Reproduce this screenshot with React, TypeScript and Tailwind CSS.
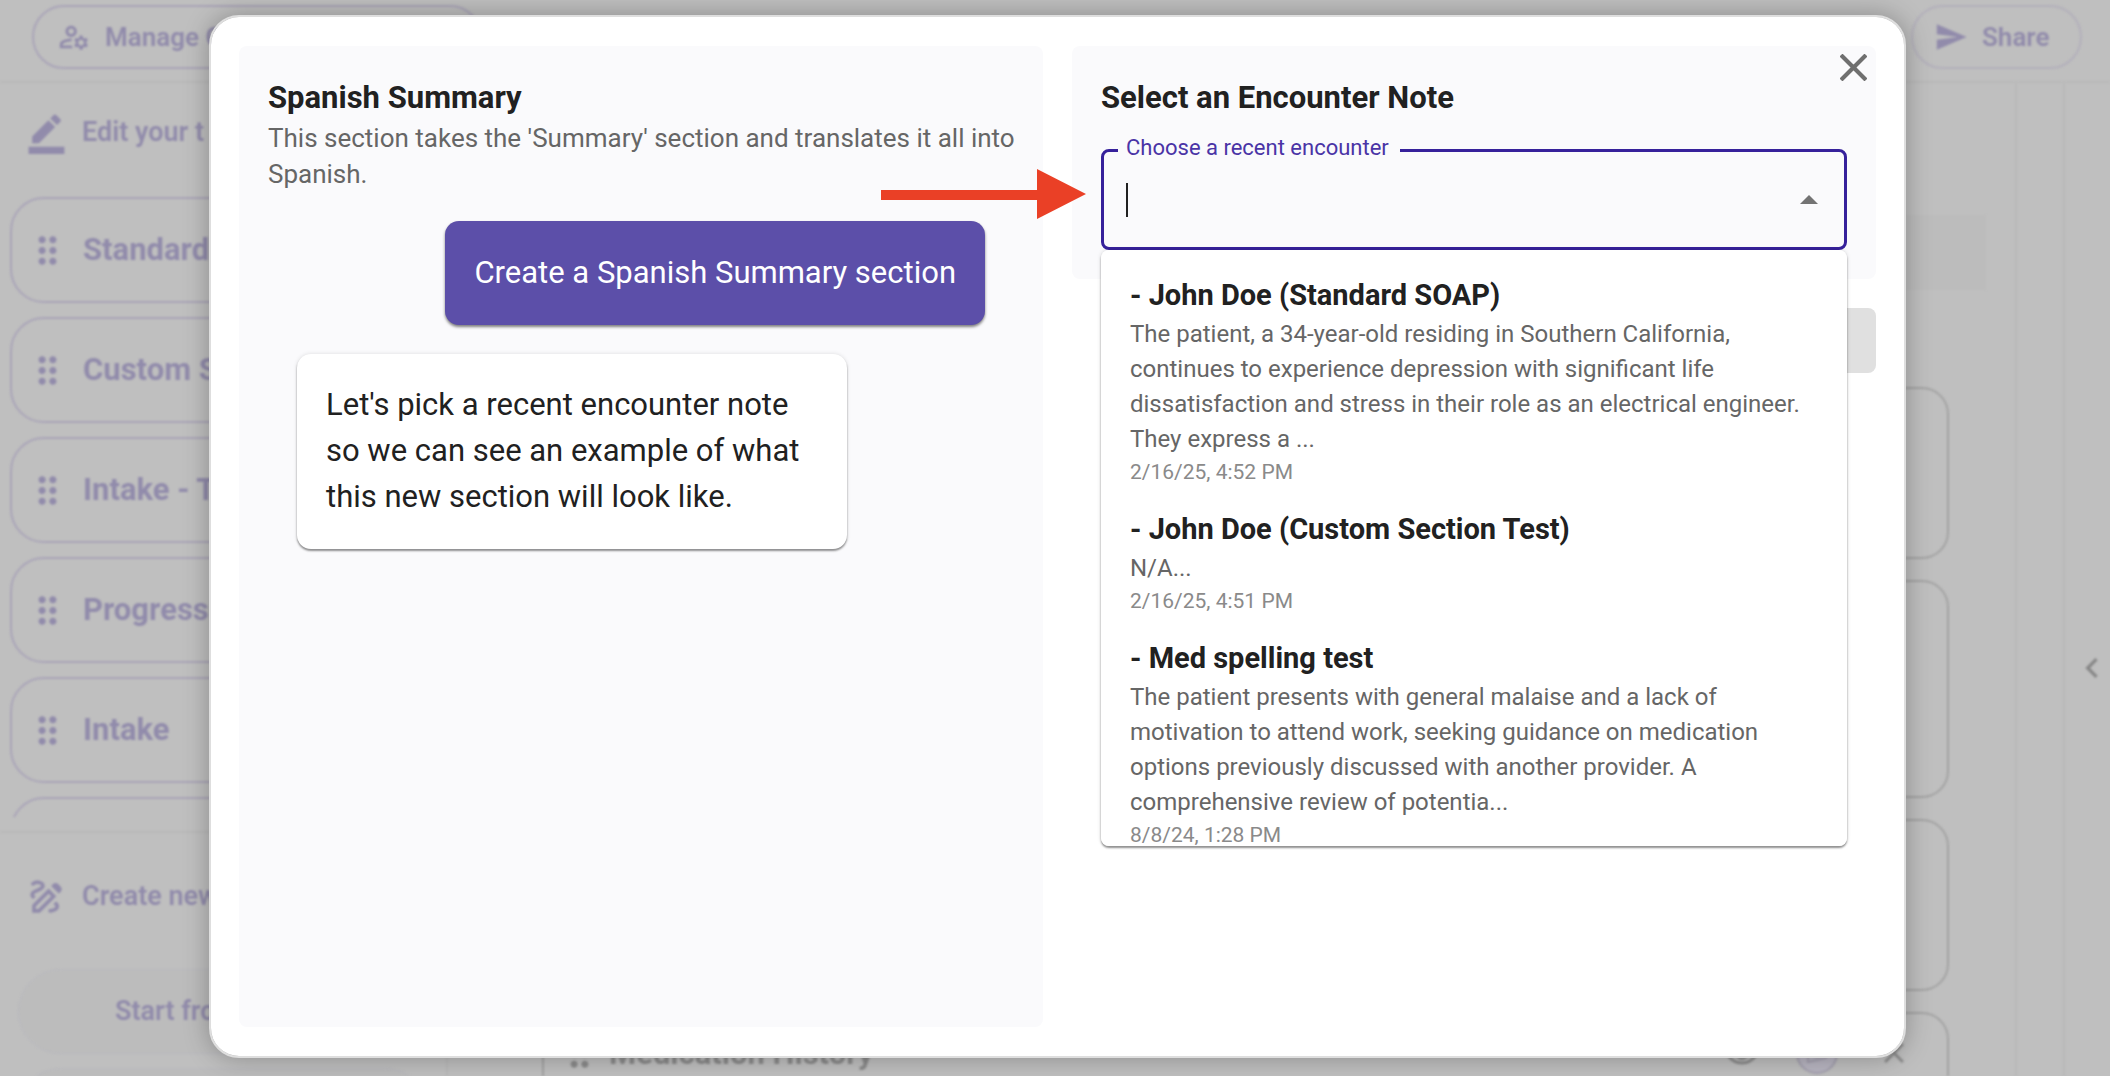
import React, { useState } from 'react';
import {
  MdBorderColor,
  MdChevronLeft,
  MdClose,
  MdDragIndicator,
  MdOutlineDraw,
  MdOutlineManageAccounts,
  MdOutlineVisibility,
  MdSend
} from 'react-icons/md';

interface Encounter {
  title: string;
  summary: string;
  date: string;
}

const templates = ['Standard', 'Custom S', 'Intake - T', 'Progress', 'Intake', ''];

const encounters: Encounter[] = [
  {
    title: '- John Doe (Standard SOAP)',
    summary:
      'The patient, a 34-year-old residing in Southern California, continues to experience depression with significant life dissatisfaction and stress in their role as an electrical engineer. They express a ...',
    date: '2/16/25, 4:52 PM'
  },
  {
    title: '- John Doe (Custom Section Test)',
    summary: 'N/A...',
    date: '2/16/25, 4:51 PM'
  },
  {
    title: '- Med spelling test',
    summary:
      'The patient presents with general malaise and a lack of motivation to attend work, seeking guidance on medication options previously discussed with another provider. A comprehensive review of potentia...',
    date: '8/8/24, 1:28 PM'
  }
];

const Header: React.FC = () => (
  <header className="flex h-[83px] shrink-0 items-start justify-between border-b-2 border-[#bababa] pl-8 pr-7 pt-[5px] text-[26px] font-semibold text-[#918bab]">
    <button className="flex h-16 w-[450px] items-center gap-[14px] rounded-full border-2 border-[#aaa5b8] pl-[23px]">
      <MdOutlineManageAccounts className="size-[34px]" />
      Manage C
    </button>
    <button className="flex h-16 w-[171px] items-center gap-[14px] rounded-full border-2 border-[#b3b0bb] pl-[21px]">
      <MdSend className="size-[34px]" />
      Share
    </button>
  </header>
);

const Sidebar: React.FC = () => (
  <aside className="flex w-[448px] shrink-0 flex-col border-r-2 border-[#bababa] text-[#918bab]">
    <h2 className="flex h-[114px] shrink-0 items-center gap-[14px] pb-4 pl-[25px] text-[27px] font-semibold">
      <MdBorderColor className="size-[43px]" />
      Edit your t
    </h2>

    <ul className="flex min-h-0 flex-1 flex-col gap-[14px] overflow-hidden px-[10px]">
      {templates.map((name, i) => (
        <li
          key={i}
          className="flex h-[106px] shrink-0 items-center gap-[14px] rounded-[34px] border-2 border-[#aaa5b8] pl-[14px] text-[31px] font-bold"
        >
          <MdDragIndicator className="size-[43px]" />
          {name}
        </li>
      ))}
    </ul>

    <div className="mt-[14px] h-[245px] shrink-0 overflow-hidden border-t-2 border-[#b9b9b9] pt-[42px]">
      <h2 className="flex items-center gap-[14px] pl-[25px] text-[27px] font-semibold">
        <MdOutlineDraw className="size-[43px]" />
        Create new
      </h2>
      <button className="ml-[18px] mt-[51px] block h-[85px] w-[410px] rounded-full border border-[#b8b8be] bg-[#bcbcbc] pl-[96px] text-left text-[27px] font-semibold">
        Start fro
      </button>
      <div className="ml-[18px] mt-[14px] h-[85px] w-[410px] rounded-full border border-[#b8b8be] bg-[#bcbcbc]" />
    </div>
  </aside>
);

const SectionCards: React.FC = () => (
  <main className="min-w-0 flex-1 overflow-hidden border-r-2 border-[#bababa] pt-[132px]">
    <div className="ml-[57px] mr-[29px] h-[75px] bg-[#bcbcbc]" />
    <div className="ml-[94px] mr-[66px] mt-[97px] flex flex-col gap-[21px]">
      <div className="h-[172px] rounded-[27px] border-2 border-[#a3a3a3]" />
      <div className="h-[218px] rounded-[27px] border-2 border-[#a3a3a3]" />
      <div className="h-[172px] rounded-[27px] border-2 border-[#a3a3a3]" />
      <div className="flex h-[172px] items-start rounded-[27px] border-2 border-[#a3a3a3] pl-[14px] pr-9 pt-[18px] text-[#8b8b8b]">
        <MdDragIndicator className="size-[43px]" />
        <h3 className="ml-2 flex-1 text-[31px] font-bold leading-[43px]">Medication History</h3>
        <MdOutlineVisibility className="mr-[36px] mt-1 size-9" />
        <span className="mr-[39px] flex size-[42px] items-center justify-center rounded-full border-2 border-[#a39fae] bg-[#b8b5c1]">
          <svg viewBox="0 0 24 24" className="size-6" fill="none" stroke="#a39fae" strokeWidth="2">
            <path d="M3 21v-7l9-8 9 6v5z M3 14l9 2 9-4" />
          </svg>
        </span>
        <MdClose className="mt-1 size-[34px]" />
      </div>
    </div>
  </main>
);

const EncounterPicker: React.FC = () => {
  const [query, setQuery] = useState('');

  return (
    <div className="relative mt-[15px]">
      <fieldset className="rounded-lg border-3 border-[#36219b] px-[14px]">
        <legend className="h-[30px] px-2">
          <label htmlFor="encounter" className="block pr-[3px] text-[22px] leading-[26px] text-[#4a34a6]">
            Choose a recent encounter
          </label>
        </legend>
        <div className="-mt-[13px] flex h-[95px] items-center pl-2">
          <span className="h-[34px] w-[2px] bg-[#212121]" />
          <input
            id="encounter"
            role="combobox"
            aria-expanded="true"
            aria-controls="encounter-list"
            value={query}
            onChange={(e) => setQuery(e.target.value)}
            className="h-full min-w-0 flex-1 bg-transparent text-[31px] caret-transparent outline-none"
          />
          <button aria-label="Toggle encounters" className="flex h-10 w-[42px] items-center justify-center">
            <svg viewBox="0 0 18 9" className="w-[18px]" fill="#737373">
              <path d="M0 9L9 0l9 9z" />
            </svg>
          </button>
        </div>
      </fieldset>

      <ul
        id="encounter-list"
        role="listbox"
        className="absolute left-0 right-0 top-full z-10 flex max-h-[596px] flex-col gap-5 overflow-y-auto rounded-lg bg-white px-[29px] pt-6 shadow-[0_2px_2px_rgba(0,0,0,0.4),0_0_4px_rgba(0,0,0,0.15)] [scrollbar-width:none]"
      >
        {encounters.map((item) => (
          <li key={item.title} role="option" aria-selected="false" className="shrink-0">
            <p className="text-[29px] font-bold leading-[43px] text-[#212121]">{item.title}</p>
            <p className="text-[24px] leading-[35px] text-[#666666]">{item.summary}</p>
            <p className="text-[21px] leading-[31px] text-[#8a8a8a]">{item.date}</p>
          </li>
        ))}
      </ul>
    </div>
  );
};

const SectionDialog: React.FC = () => (
  <div
    role="dialog"
    aria-modal="true"
    className="relative grid flex-1 grid-cols-2 gap-[29px] rounded-[30px] border-2 border-[#dedede] bg-white bg-clip-padding px-7 py-[29px] shadow-[0_0_26px_rgba(0,0,0,0.28)]"
  >
    <section className="flex flex-col rounded-lg bg-[#fafafc] p-[29px]">
      <h1 className="text-[31px] font-bold leading-[45px] text-[#212121]">Spanish Summary</h1>
      <p className="-mr-2 text-[26px] leading-9 text-[#666666]">
        This section takes the 'Summary' section and translates it all into Spanish.
      </p>
      <div className="mt-[29px] flex flex-col gap-[29px] px-[29px] text-[31px] leading-[46px]">
        <p className="self-end rounded-[14px] bg-[#5c4fa9] p-[29px] text-white shadow-[0_2px_3px_rgba(0,0,0,0.5)]">
          Create a Spanish Summary section
        </p>
        <p className="w-[550px] self-start rounded-[14px] bg-white p-[29px] pt-7 text-[#212121] shadow-[0_2px_2px_rgba(0,0,0,0.4),0_0_4px_rgba(0,0,0,0.12)]">
          Let's pick a recent encounter note so we can see an example of what this new section will look like.
        </p>
      </div>
    </section>

    <section>
      <div className="rounded-lg bg-[#fafafc] p-[29px]">
        <h2 className="text-[31px] font-bold leading-[45px] text-[#212121]">Select an Encounter Note</h2>
        <EncounterPicker />
      </div>
      <button aria-label="Next" disabled className="ml-auto mt-[29px] block h-[65px] w-44 rounded-lg bg-[#e0e0e0]" />
    </section>

    <button aria-label="Close" className="absolute right-[37px] top-[37px] text-[#6f6f6f]">
      <svg viewBox="0 0 26 26" className="size-[27px]" stroke="currentColor" strokeWidth="4">
        <path d="M1 1l24 24M25 1L1 25" />
      </svg>
    </button>

    {/* Arrow pointing at the encounter field */}
    <svg viewBox="0 0 205 50" className="absolute left-[670px] top-[152px] w-[205px]" fill="#ea4026">
      <path d="M0 21h156V0l49 25-49 25V31H0z" />
    </svg>
  </div>
);

const App: React.FC = () => {
  return (
    <div className="relative h-screen overflow-hidden bg-[#bfbfbf] font-[Roboto,sans-serif]">
      <div className="flex h-full flex-col blur-[1px]">
        <Header />
        <div className="flex min-h-0 flex-1">
          <Sidebar />
          <SectionCards />
          <div className="w-12 shrink-0 border-r-2 border-[#bababa]" />
          <div className="flex w-[45px] shrink-0 items-center justify-center pl-2 text-[#878787]">
            <button aria-label="Expand panel">
              <MdChevronLeft className="mt-44 size-10" />
            </button>
          </div>
        </div>
      </div>

      <div className="absolute inset-0 flex pb-[18px] pl-[209px] pr-[204px] pt-[15px]">
        <SectionDialog />
      </div>
    </div>
  );
};

export default App;
